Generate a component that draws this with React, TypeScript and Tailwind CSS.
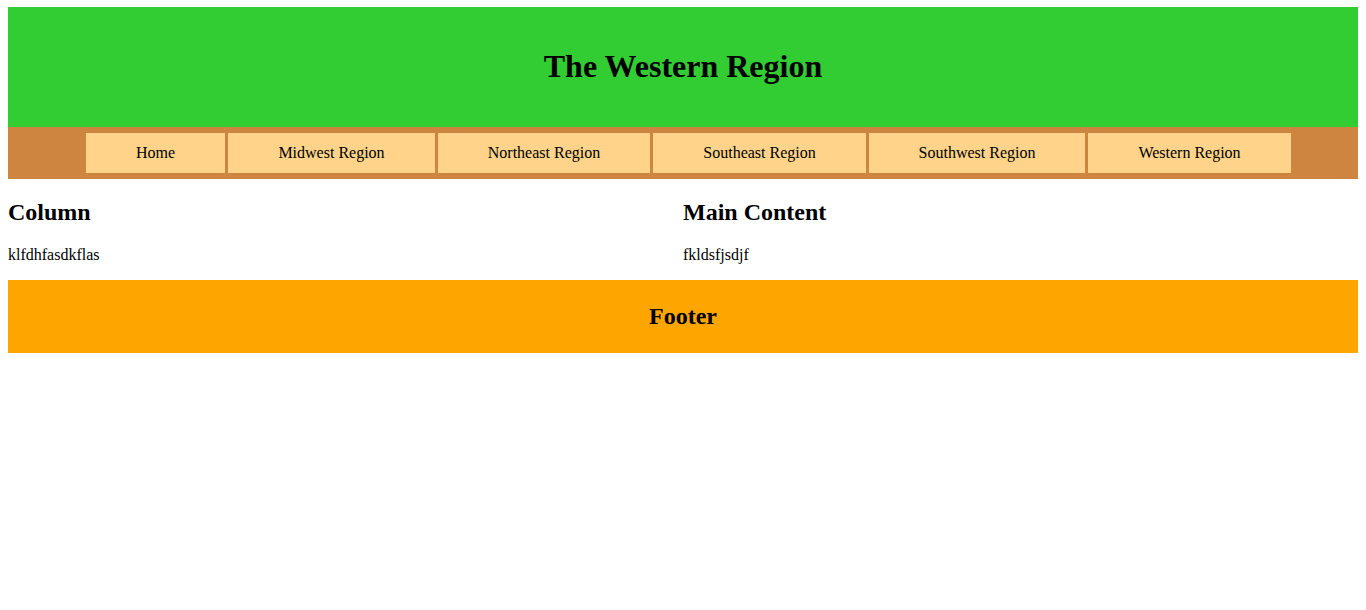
const links = [
  { label: "Home", w: "w-[139px]" },
  { label: "Midwest Region", w: "w-[207px]" },
  { label: "Northeast Region", w: "w-[212px]" },
  { label: "Southeast Region", w: "w-[213px]" },
  { label: "Southwest Region", w: "w-[216px]" },
  { label: "Western Region", w: "w-[203px]" },
];

export default function App() {
  return (
    <div className="min-h-[610px] bg-white px-2 pt-[7px] text-black font-['Liberation_Serif','Times_New_Roman',serif]">
      <header className="flex h-[120px] items-center justify-center bg-[#32cd32] pb-[3px]">
        <h1 className="text-[32px] font-bold leading-none">The Western Region</h1>
      </header>

      <nav className="flex h-[52px] items-start gap-[3px] bg-[#cd853f] pl-[78px] pt-[6px]">
        {links.map((link) => (
          <a
            key={link.label}
            href="#"
            className={`${link.w} flex h-[40px] items-center justify-center bg-[#ffd48a] text-base`}
          >
            {link.label}
          </a>
        ))}
      </nav>

      <main className="grid grid-cols-2">
        <section>
          <h2 className="mt-5 mb-5 text-2xl leading-[27px] font-bold">Column</h2>
          <p className="mb-4 text-base leading-[18px]">klfdhfasdkflas</p>
        </section>
        <section>
          <h2 className="mt-5 mb-5 text-2xl leading-[27px] font-bold">Main Content</h2>
          <p className="mb-4 text-base leading-[18px]">fkldsfjsdjf</p>
        </section>
      </main>

      <footer className="flex h-[73px] items-center justify-center bg-[#ffa500]">
        <h2 className="text-2xl leading-[27px] font-bold">Footer</h2>
      </footer>
    </div>
  );
}
